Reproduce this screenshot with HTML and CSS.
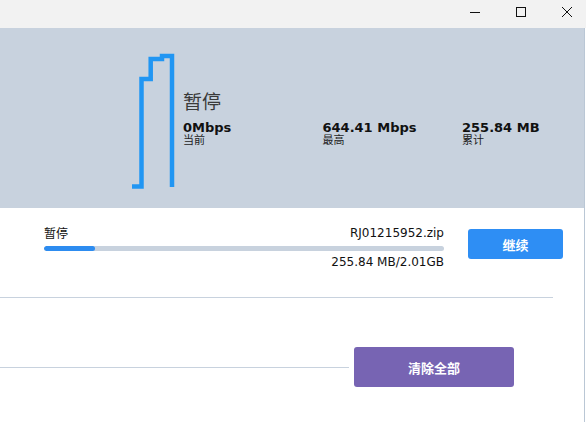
FILE: index.html
```html
<!DOCTYPE html>
<html lang="zh-CN">
  <head>
    <meta charset="UTF-8" />
    <meta name="viewport" content="width=device-width, initial-scale=1.0" />
    <title>下载</title>
    <link rel="stylesheet" href="styles.css">
  </head>
  <body>
    <div class="titlebar">
      <div class="controls">
        <div class="ctl">
          <svg width="10" height="10" viewBox="0 0 10 10"><path d="M0 5.5H10" stroke="#111" stroke-width="1" /></svg>
        </div>
        <div class="ctl">
          <svg width="10" height="10" viewBox="0 0 10 10"><rect x="0.5" y="0.5" width="9" height="9" fill="none" stroke="#111" stroke-width="1" /></svg>
        </div>
        <div class="ctl">
          <svg width="10" height="10" viewBox="0 0 10 10"><path d="M0 0L10 10M10 0L0 10" stroke="#111" stroke-width="1" /></svg>
        </div>
      </div>
    </div>

    <div class="app">
      <div class="speed-panel">
        <svg class="graph" width="46" height="180" viewBox="0 0 46 180">
          <polyline points="2,158.5 11.5,158.5 11.5,51 20.7,51 20.7,31 32,31 32,28 42,28 42,159"
            fill="none" stroke="#2196f3" stroke-width="4.5" stroke-linejoin="miter" />
        </svg>
        <div class="speed-info">
          <div class="status-title">暂停</div>
          <div class="stats">
            <div class="stat">
              <div class="stat-value">0Mbps</div>
              <div class="stat-label">当前</div>
            </div>
            <div class="stat">
              <div class="stat-value">644.41 Mbps</div>
              <div class="stat-label">最高</div>
            </div>
            <div class="stat">
              <div class="stat-value">255.84 MB</div>
              <div class="stat-label">累计</div>
            </div>
          </div>
        </div>
      </div>

      <div class="list">
        <div class="item">
          <div class="item-info">
            <div class="item-head">
              <span class="item-state">暂停</span>
              <span class="item-name">RJ01215952.zip</span>
            </div>
            <div class="progress"><div class="progress-fill" style="width: 12.7%"></div></div>
            <div class="item-size">255.84 MB/2.01GB</div>
          </div>
          <button class="btn btn-blue">继续</button>
        </div>
        <div class="divider"></div>
        <div class="footer">
          <div class="footer-line"></div>
          <button class="btn btn-purple">清除全部</button>
        </div>
      </div>
    </div>
  </body>
</html>
```

FILE: styles.css
```css
html,
body {
  margin: 0;
  padding: 0;
  width: 586px;
  height: 422px;
  overflow: hidden;
  background: #fff;
  font-family: "DejaVu Sans", "Noto Sans CJK SC", sans-serif;
  color: #111;
}

.titlebar {
  height: 28px;
  background: #f2f2f2;
  display: flex;
  justify-content: flex-end;
}

.controls {
  display: flex;
  margin-right: -4px;
}

.ctl {
  width: 46px;
  height: 28px;
  display: flex;
  align-items: center;
  justify-content: center;
}

.ctl svg {
  display: block;
  margin-top: -4px;
}

.app {
  width: 584px;
  height: 394px;
  border-right: 1px solid #bac7d5;
}

.speed-panel {
  height: 180px;
  background: #c8d2de;
  display: flex;
  padding-left: 130px;
}

.graph {
  display: block;
  flex: none;
}

.speed-info {
  margin-left: 7px;
  padding-top: 61px;
}

.status-title {
  font-family: "Noto Sans CJK SC", sans-serif;
  font-size: 19px;
  line-height: 24px;
  color: #3a3a3a;
}

.stats {
  display: flex;
  margin-top: 8px;
}

.stat {
  width: 139.5px;
}

.stat-value {
  font-size: 13px;
  font-weight: bold;
  line-height: 13px;
}

.stat-label {
  font-family: "Noto Sans CJK SC", sans-serif;
  font-size: 11px;
  line-height: 11px;
  color: #222;
}

.list {
  padding-top: 17px;
}

.item {
  display: flex;
  align-items: flex-start;
  padding-left: 44px;
}

.item-info {
  width: 400px;
}

.item-head {
  display: flex;
  justify-content: space-between;
  font-size: 12px;
  line-height: 16px;
}

.item-state {
  font-family: "Noto Sans CJK SC", sans-serif;
}

.progress {
  height: 5px;
  margin-top: 5px;
  border-radius: 3px;
  background: #c8d2de;
  overflow: hidden;
}

.progress-fill {
  height: 100%;
  border-radius: 3px;
  background: #2d8cf0;
}

.item-size {
  text-align: right;
  font-size: 12px;
  line-height: 16px;
  margin-top: 3px;
}

.btn {
  border: none;
  border-radius: 3px;
  color: #fff;
  font-family: "Noto Sans CJK SC", sans-serif;
  font-size: 13px;
  font-weight: bold;
  padding: 0;
}

.btn-blue {
  width: 95px;
  height: 30px;
  margin-left: 24px;
  margin-top: 4px;
  background: #2e8ef4;
}

.divider {
  height: 1px;
  background: #c8d2de;
  margin: 27px 31px 0 0;
}

.footer {
  display: flex;
  align-items: center;
  margin-top: 49px;
  padding-right: 70px;
}

.footer-line {
  flex: 1;
  height: 1px;
  background: #c8d2de;
  margin-right: 5px;
}

.btn-purple {
  width: 160px;
  height: 40px;
  background: #7764b3;
}
```
